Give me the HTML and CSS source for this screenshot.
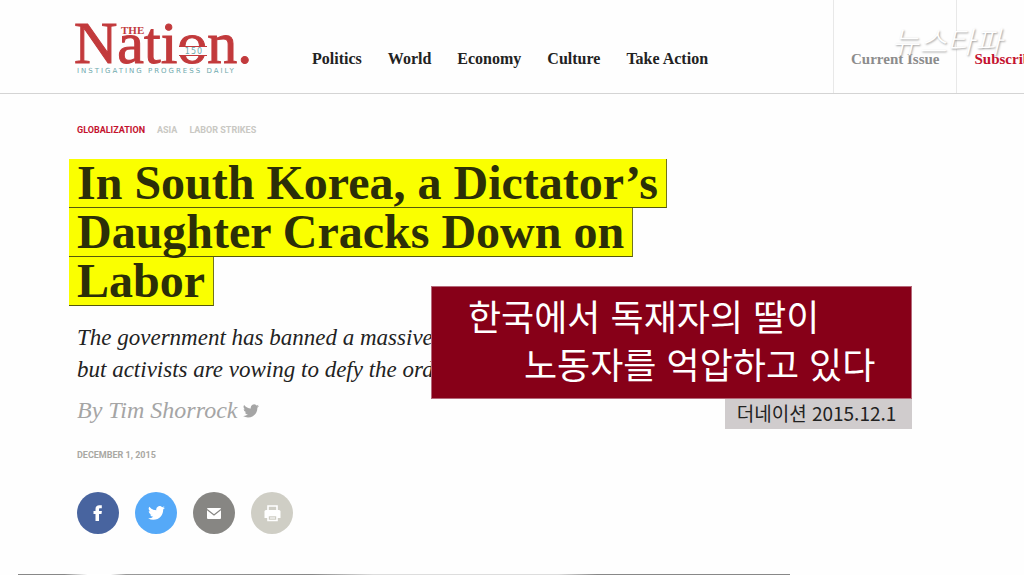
FILE: index.html
```html
<!DOCTYPE html>
<html lang="en">
  <head>
    <meta charset="UTF-8" />
    <meta name="viewport" content="width=device-width, initial-scale=1.0" />
    <title>In South Korea, a Dictator’s Daughter Cracks Down on Labor</title>
    <link rel="stylesheet" href="styles.css">
  </head>
  <body>
    <header class="site-header">
      <a class="logo" href="#">
        <svg width="178" height="54" viewBox="0 0 178 54">
          <text class="logo-name" x="1" y="41">Nation.</text>
          <text class="logo-the" x="48" y="12">THE</text>
          <!-- band across the letter o -->
          <rect x="106" y="24" width="28" height="10" fill="#fefefe" />
          <path d="M106 24.500H134M106 33.500H134" stroke="#c23a3c" />
          <text class="logo-years" x="121" y="32">150</text>
          <text class="logo-tagline" x="4" y="51">INSTIGATING PROGRESS DAILY</text>
        </svg>
      </a>

      <nav class="main-nav">
        <a href="#">Politics</a>
        <a href="#">World</a>
        <a href="#">Economy</a>
        <a href="#">Culture</a>
        <a href="#">Take Action</a>
      </nav>

      <div class="account-nav">
        <a class="current-issue" href="#">Current Issue</a>
        <a class="subscribe" href="#">Subscribe</a>
      </div>

      <div class="watermark" lang="ko">뉴스타파</div>
    </header>

    <main class="article">
      <div class="topics">
        <a class="active" href="#">GLOBALIZATION</a>
        <a href="#">ASIA</a>
        <a href="#">LABOR STRIKES</a>
      </div>

      <h1 class="headline">
        <span>In South Korea, a Dictator’s</span>
        <span>Daughter Cracks Down on</span>
        <span>Labor</span>
      </h1>

      <p class="summary">
        The government has banned a massive<br />
        but activists are vowing to defy the order
      </p>

      <p class="byline">
        By Tim Shorrock
        <svg width="16" height="14" viewBox="0 0 24 20">
          <path fill="currentColor" d="M24 2.400a10 10 0 0 1-2.800.8A5 5 0 0 0 23.300.5a10 10 0 0 1-3.100 1.200A4.900 4.900 0 0 0 11.800 6.200 14 14 0 0 1 1.700 1a4.900 4.900 0 0 0 1.500 6.600A5 5 0 0 1 1 7a4.900 4.900 0 0 0 3.900 4.900 5 5 0 0 1-2.200.1 4.900 4.900 0 0 0 4.600 3.400A10 10 0 0 1 0 17.500 14 14 0 0 0 7.500 19.700C16.600 19.700 21.900 12 21.500 5A10 10 0 0 0 24 2.400Z" />
        </svg>
      </p>

      <time class="date" datetime="2015-12-01">DECEMBER 1, 2015</time>

      <div class="share">
        <button class="facebook" aria-label="Facebook">
          <svg width="10" height="16" viewBox="0 0 10 16">
            <path fill="#fff" d="M2.500 16V9H.5V6h2V4C2.500 1.500 4 .3 6.200.3h2.600v2.900H7.200C6.200 3.200 6 3.600 6 4.400V6h2.900L8.500 9H6v7Z" />
          </svg>
        </button>
        <button class="twitter" aria-label="Twitter">
          <svg width="17" height="14" viewBox="0 0 24 20">
            <path fill="#fff" d="M24 2.400a10 10 0 0 1-2.800.8A5 5 0 0 0 23.300.5a10 10 0 0 1-3.100 1.200A4.900 4.900 0 0 0 11.800 6.200 14 14 0 0 1 1.700 1a4.900 4.900 0 0 0 1.500 6.600A5 5 0 0 1 1 7a4.900 4.900 0 0 0 3.900 4.900 5 5 0 0 1-2.200.1 4.900 4.900 0 0 0 4.600 3.400A10 10 0 0 1 0 17.500 14 14 0 0 0 7.500 19.700C16.600 19.700 21.900 12 21.500 5A10 10 0 0 0 24 2.400Z" />
          </svg>
        </button>
        <button class="email" aria-label="Email">
          <svg width="14" height="11" viewBox="0 0 14 11">
            <rect width="14" height="11" rx="1" fill="#fff" />
            <path d="M0 1.500 7 7l7-5.500" fill="none" stroke="#878683" stroke-width="1.300" />
          </svg>
        </button>
        <button class="print" aria-label="Print">
          <svg width="17" height="17" viewBox="0 0 17 17">
            <path d="M4 5V1h9v4" fill="none" stroke="#fff" stroke-width="1.600" />
            <path d="M2 5h13q1.500 0 1.500 1.500V13H.5V6.500Q.5 5 2 5Z" fill="#fff" />
            <path d="M4 10.500h9v5H4Z" fill="#cfcec5" stroke="#fff" stroke-width="1.600" />
            <path d="M6 13h5" stroke="#fff" />
          </svg>
        </button>
      </div>

      <aside class="caption" lang="ko">
        <p class="caption-title">
          <span>한국에서 독재자의 딸이</span>
          <span>노동자를 억압하고 있다</span>
        </p>
        <p class="caption-source">더네이션 2015.12.1</p>
      </aside>
    </main>

    <div class="lead-image"></div>
  </body>
</html>
```
FILE: styles.css
```css
* {
  box-sizing: border-box;
}

body {
  margin: 0;
  background: #fefefe;
  color: #222;
  font-family: "Liberation Serif", "Times New Roman", serif;
}

a {
  color: inherit;
  text-decoration: none;
}

p {
  margin: 0;
}

.site-header {
  position: relative;
  display: flex;
  height: 94px;
  padding-left: 73px;
  border-bottom: 1px solid #d4d4d4;
  overflow: hidden;
}

.logo {
  flex: none;
  margin-top: 22px;
}

.logo svg {
  overflow: visible;
}

.logo-name {
  font-size: 60px;
  fill: #c23a3c;
  stroke: #c23a3c;
}

.logo-the {
  font-size: 11px;
  font-weight: bold;
  fill: #c23a3c;
}

.logo-years {
  font-family: "DejaVu Sans", sans-serif;
  font-size: 8px;
  letter-spacing: 1px;
  text-anchor: middle;
  fill: #6fa9ad;
}

.logo-tagline {
  font-family: "DejaVu Sans", sans-serif;
  font-size: 7px;
  letter-spacing: 2px;
  fill: #6fa9ad;
  stroke: none;
}

.main-nav {
  display: flex;
  gap: 26px;
  margin: 50px auto 0 61px;
  font-size: 16px;
  font-weight: bold;
  line-height: 18px;
  white-space: nowrap;
}

.account-nav {
  display: flex;
  flex: 0 0 191px;
  overflow: hidden;
  font-size: 15px;
  font-weight: bold;
  line-height: 18px;
  white-space: nowrap;
}

.account-nav a {
  flex: none;
  padding: 50px 17px 0;
  border-left: 1px solid #e8e8e8;
}

.current-issue {
  color: #8c8c8c;
}

.account-nav .subscribe {
  color: #c4122f;
}

.watermark {
  position: absolute;
  top: 20px;
  right: 22px;
  font-family: "Noto Sans CJK KR", sans-serif;
  font-size: 30px;
  font-style: italic;
  font-weight: 300;
  line-height: 40px;
  color: #fff;
  text-shadow: 1px 1px 2px #999;
}

.article {
  position: relative;
  padding: 29px 77px 0;
}

.topics {
  display: flex;
  gap: 12px;
  font-family: Roboto, "Liberation Sans", sans-serif;
  font-size: 9px;
  font-weight: bold;
  line-height: 14px;
  color: #c9c8c3;
}

.topics .active {
  color: #c4122f;
}

.headline {
  margin: 22px 0 0 -8px;
  font-size: 48px;
  line-height: 48px;
  color: #2c2f08;
}

.headline span {
  display: block;
  width: fit-content;
  padding: 0 8px;
  background: #faff00;
  border-right: 1px solid #73751c;
  border-bottom: 1px solid #55580c;
}

.summary {
  margin-top: 16px;
  font-size: 23px;
  font-style: italic;
  line-height: 32px;
}

.byline {
  margin-top: 8px;
  font-size: 24px;
  font-style: italic;
  line-height: 32px;
  color: #a5a5a5;
}

.date {
  display: block;
  margin-top: 22px;
  font-family: Roboto, "Liberation Sans", sans-serif;
  font-size: 9px;
  font-weight: bold;
  line-height: 14px;
  color: #a9a8a3;
}

.share {
  display: flex;
  gap: 16px;
  margin-top: 30px;
}

.share button {
  display: flex;
  align-items: center;
  justify-content: center;
  width: 42px;
  height: 42px;
  padding: 0;
  border: none;
  border-radius: 50%;
  cursor: pointer;
}

.share .facebook {
  background: #48649f;
}

.share .twitter {
  background: #55a9f8;
}

.share .email {
  background: #878683;
}

.share .print {
  background: #cfcec5;
}

/* translated caption over the article */
.caption {
  position: absolute;
  top: 192px;
  left: 431px;
  display: flex;
  flex-direction: column;
  align-items: flex-end;
  font-family: "Noto Sans CJK KR", sans-serif;
}

.caption-title {
  padding: 4px 36px 11px;
  background: #870018;
  border: 1px solid #b5697a;
  color: #fff;
  font-size: 36px;
  line-height: 48px;
}

.caption-title span {
  display: block;
}

.caption-title span:first-child {
  margin-right: 56px;
}

.caption-title span:last-child {
  margin-left: 56px;
}

.caption-source {
  padding: 0 16px 2px 12px;
  background: #d0cccd;
  color: #222;
  font-size: 19px;
  line-height: 28px;
}

.lead-image {
  width: 772px;
  max-width: 100%;
  height: 1px;
  margin: 40px 0 0 18px;
  background: linear-gradient(to right, #888 6%, #fff 9%, #fff 12%, #999 14%, #888 38%, #ddd 46%, #ddd 70%, #888 75%, #888);
}
```
